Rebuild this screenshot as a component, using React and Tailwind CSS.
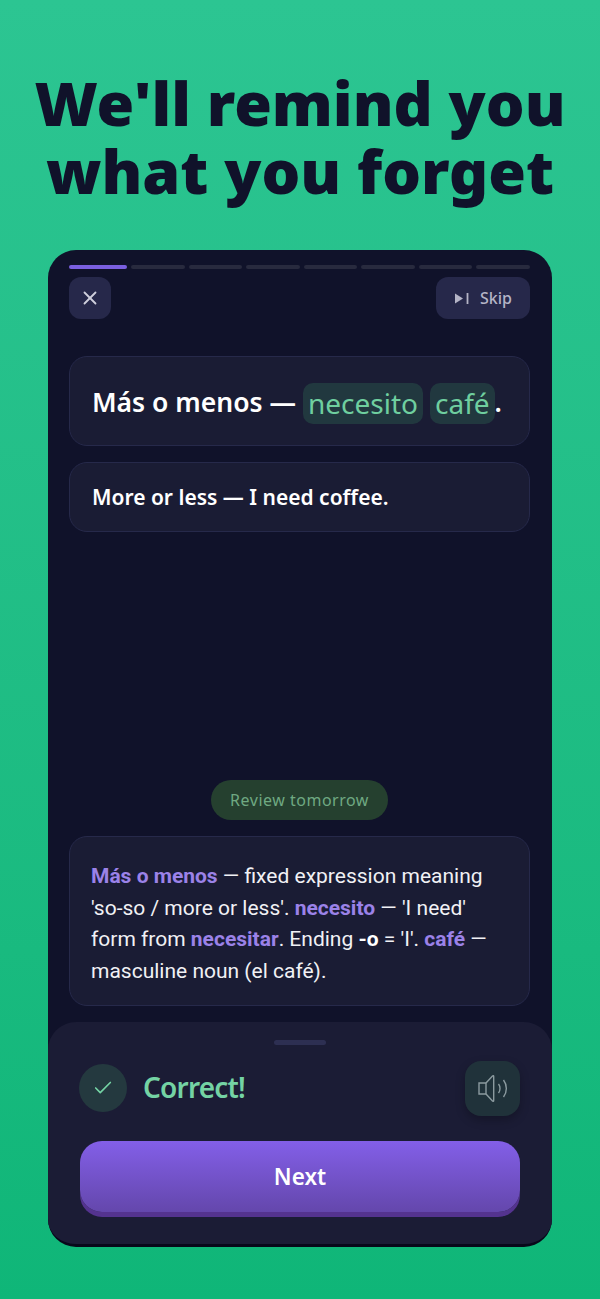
import { Check, X } from 'lucide-react'

const steps = [1, 2, 3, 4, 5, 6, 7]

function SkipIcon() {
    return (
        <svg width="16" height="13" viewBox="0 0 16 13" fill="none">
            <path d="M1 1.5v10L9 6.5z" fill="#b4b4c6" />
            <path d="M13.5 1v11" stroke="#b4b4c6" strokeWidth="1.8" />
        </svg>
    )
}

function SpeakerIcon() {
    return (
        <svg width="30" height="28" viewBox="0 0 30 28" fill="none" stroke="#8b9a9f" strokeWidth="1.4">
            <path d="M1 9h7v11H1z" />
            <path d="M8 9 14.5 2c.6-.6 1.2-.3 1.2.5v24c0 .8-.6 1.1-1.2.5L8 20" />
            <path d="M20.5 10c2 2.5 2 6.5 0 9" />
            <path d="M25.5 6c3.8 5 3.8 12 0 17" />
        </svg>
    )
}

export default function App() {
    return (
        <div className="flex h-[1299px] w-[600px] flex-col items-center bg-gradient-to-b from-[#2cc592] to-[#0fb678] font-['Noto_Sans',sans-serif]">
            <h1 className="mt-[69px] text-center text-[61px] leading-[68px] font-black whitespace-nowrap text-[#10122a]">
                We'll remind you
                <br />
                what you forget
            </h1>

            <div className="mt-[45px] flex h-[997px] w-[504px] flex-col overflow-hidden rounded-[28px] border-b-[3px] border-[#08081a] bg-[#10122a]">
                <div className="flex flex-col pt-[15px] pr-[22px] pl-[21px]">
                    <div className="flex gap-[4px]">
                        <div className="h-[4px] w-[58px] rounded-full bg-[#7a5fe0]" />
                        {steps.map((step) => (
                            <div key={step} className="h-[4px] flex-1 rounded-full bg-[#282a3e]" />
                        ))}
                    </div>

                    <div className="mt-[8px] flex items-center justify-between">
                        <button className="flex h-[42px] w-[42px] items-center justify-center rounded-[12px] bg-[#26284a]">
                            <X size={22} strokeWidth={2} color="#cfcfdc" />
                        </button>
                        <button className="flex h-[42px] w-[94px] items-center justify-center gap-[10px] rounded-[12px] bg-[#26284a] text-[16px] font-medium text-[#b4b4c6]">
                            <SkipIcon />
                            Skip
                        </button>
                    </div>

                    <div className="mt-[37px] flex h-[90px] items-center whitespace-nowrap rounded-[18px] border border-[#26294a] bg-[#1a1c34] pt-[4px] pl-[22px] text-[26.5px] font-semibold text-white">
                        Más o menos —
                        <span className="mr-[7px] ml-[7px] flex h-[41px] items-center rounded-[10px] bg-[#21383f] px-[5px] text-[28px] font-normal text-[#6fcf9f]">necesito</span>
                        <span className="flex h-[41px] items-center rounded-[10px] bg-[#21383f] px-[5px] text-[28px] font-normal text-[#6fcf9f]">café</span>.
                    </div>

                    <div className="mt-[16px] flex h-[70px] items-center rounded-[18px] border border-[#26294a] bg-[#1a1c34] pt-[2px] pl-[22px] text-[21px] font-semibold text-white">
                        More or less — I need coffee.
                    </div>
                </div>

                <div className="flex-1" />

                <div className="flex flex-col items-center pr-[22px] pl-[21px]">
                    <div className="flex h-[40px] w-[177px] items-center justify-center rounded-full bg-[#25402f] text-[16px] tracking-[0.5px] text-[#6fa982]">
                        Review tomorrow
                    </div>

                    <div className="mt-[16px] h-[170px] w-full rounded-[18px] border border-[#26294a] bg-[#1a1c34] px-[21px] pt-[24px] font-['Roboto',sans-serif] text-[21px] leading-[31.5px] text-[#f1f1f5]">
                        <b className="font-bold text-[#9b82e8]">Más o menos</b> — fixed expression meaning 'so-so / more or less'.{' '}
                        <b className="font-bold text-[#9b82e8]">necesito</b> — 'I need' form from{' '}
                        <b className="font-bold text-[#9b82e8]">necesitar</b>. Ending <b className="font-bold text-white">-o</b> = 'I'.{' '}
                        <b className="font-bold text-[#9b82e8]">café</b> — masculine noun (el café).
                    </div>
                </div>

                <div className="mt-[16px] flex h-[222px] flex-col rounded-t-[28px] bg-[#1b1c35] px-[32px]">
                    <div className="mx-auto mt-[18px] h-[5px] w-[52px] rounded-full bg-[#2d2f52]" />

                    <div className="mt-[15px] flex h-[56px] items-center">
                        <div className="-ml-px flex h-[48px] w-[48px] items-center justify-center rounded-full bg-[#24393f]">
                            <Check size={22} strokeWidth={1.8} color="#74d3a4" />
                        </div>
                        <span className="mb-[2px] ml-[16px] text-[28px] font-semibold tracking-[-0.8px] text-[#74d3a4]">Correct!</span>
                        <button className="ml-auto flex h-[55px] w-[55px] items-center justify-center rounded-[16px] bg-[#20323a] shadow-[0_4px_10px_rgba(0,0,0,0.25)]">
                            <SpeakerIcon />
                        </button>
                    </div>

                    <button className="mt-[25px] flex h-[71px] w-full items-center justify-center rounded-[22px] bg-gradient-to-b from-[#835fe8] to-[#6447ac] text-[22.5px] font-semibold text-white shadow-[0_5px_0_#54338f]">
                        Next
                    </button>
                </div>
            </div>
        </div>
    )
}
